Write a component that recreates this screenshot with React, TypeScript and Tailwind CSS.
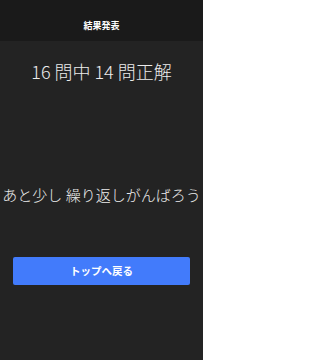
import React from "react";

export default function App() {
  const font = { fontFamily: '"Noto Sans CJK JP", "Noto Sans", sans-serif' };
  return (
    <div className="w-[203px] h-[360px] bg-[#232323] flex flex-col" style={font}>
      <div className="h-[41px] bg-[#1a1a1a] flex items-center justify-center pt-[9px]">
        <span className="text-[9px] font-bold text-white leading-none">結果発表</span>
      </div>
      <div className="mt-[18px] h-[24px] flex items-center justify-center text-[18px] font-light text-[#ececec] whitespace-nowrap">
        16 問中 14 問正解
      </div>
      <div className="mt-[102px] h-[20px] flex items-center justify-center text-[15px] font-light text-[#ececec] whitespace-nowrap">
        あと少し 繰り返しがんばろう
      </div>
      <button className="mt-[52px] mx-[13px] h-[28px] rounded-[2px] bg-[#427bfb] flex items-center justify-center text-[10.5px] font-bold text-white">
        トップへ戻る
      </button>
    </div>
  );
}
